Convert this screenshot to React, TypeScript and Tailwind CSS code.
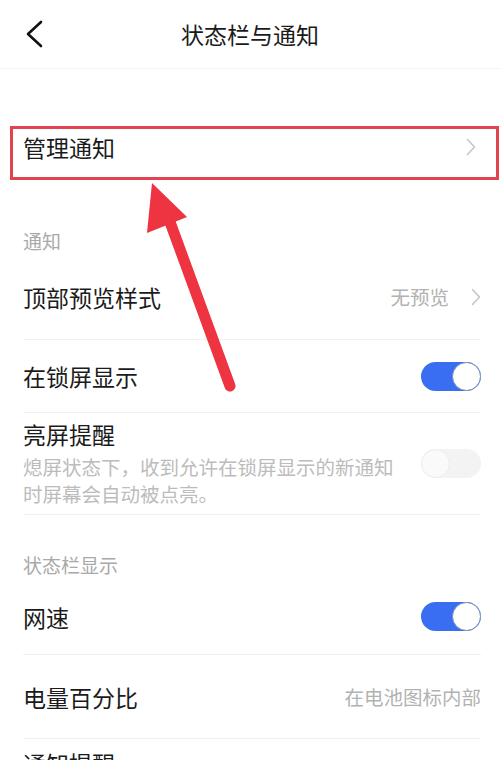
import React from 'react';

const font = { fontFamily: '"Noto Sans CJK SC", "Noto Sans", sans-serif' };

const Chevron: React.FC = () => (
  <svg width="10" height="18" viewBox="0 0 10 18" className="shrink-0">
    <polyline points="1.5,1.5 8.5,9 1.5,16.5" fill="none" stroke="#c6c6c6" strokeWidth="1.6" strokeLinecap="round" strokeLinejoin="round" />
  </svg>
);

const Toggle: React.FC<{ on: boolean }> = ({ on }) =>
  on ? (
    <div className="w-[60px] h-[29px] rounded-full bg-[#3a6ef2] flex items-center justify-end shrink-0">
      <div className="w-[29px] h-[29px] rounded-full bg-white border-[1.5px] border-[#7b8fb8]" />
    </div>
  ) : (
    <div className="w-[60px] h-[29px] rounded-full bg-[#f3f3f3] flex items-center justify-start shrink-0">
      <div className="w-[29px] h-[29px] rounded-full bg-[#fafafa] border border-[#ececec]" />
    </div>
  );

const SectionLabel: React.FC<{ text: string; pt: string }> = ({ text, pt }) => (
  <div className={`${pt} pb-[2px] pl-[23px] text-[19px] leading-[24px] text-[#a9a9a9]`}>{text}</div>
);

const Row: React.FC<{ h: string; children: React.ReactNode; last?: boolean }> = ({ h, children, last }) => (
  <div className={`${h} ml-[23px] mr-[19px] flex items-center justify-between ${last ? '' : 'border-b border-[#f0f0f0]'}`}>
    {children}
  </div>
);

export default function App() {
  return (
    <div className="relative w-[500px] h-[760px] overflow-hidden bg-white text-[#1b1b1b]" style={font}>
      {/* header */}
      <div className="h-[69px] relative flex items-center justify-center border-b border-[#f4f4f4]">
        <svg width="20" height="30" viewBox="0 0 20 30" className="absolute left-[24px] top-[19px]">
          <polyline points="17,3 4,15 17,27" fill="none" stroke="#111" strokeWidth="2.6" strokeLinecap="round" strokeLinejoin="round" />
        </svg>
        <div className="text-[23px] leading-[30px]">状态栏与通知</div>
      </div>

      {/* manage notifications, highlighted */}
      <div className="mt-[57px] ml-[10px] mr-[1px] h-[54px] border-[3px] border-[#e2434e] flex items-center justify-between pl-[10px] pr-[20px]">
        <div className="text-[23px] leading-[30px] -mt-[12px]">管理通知</div>
        <div className="-mt-[12px]">
          <Chevron />
        </div>
      </div>

      <SectionLabel text="通知" pt="pt-[49px]" />
      <Row h="h-[85px]">
        <div className="text-[23px] leading-[30px]">顶部预览样式</div>
        <div className="flex items-center gap-[22px]">
          <span className="text-[19.5px] text-[#b2b2b2]">无预览</span>
          <Chevron />
        </div>
      </Row>
      <Row h="h-[73px]">
        <div className="text-[23px] leading-[30px]">在锁屏显示</div>
        <Toggle on />
      </Row>
      <Row h="h-[102px]">
        <div className="flex flex-col">
          <div className="text-[23px] leading-[28px]">亮屏提醒</div>
          <div className="mt-[5px] w-[376px] text-[19.5px] leading-[27px] text-[#bcbcbc]">
            熄屏状态下，收到允许在锁屏显示的新通知时屏幕会自动被点亮。
          </div>
        </div>
        <Toggle on={false} />
      </Row>

      <SectionLabel text="状态栏显示" pt="pt-[38px]" />
      <Row h="h-[76px]">
        <div className="text-[23px] leading-[30px]">网速</div>
        <Toggle on />
      </Row>
      <Row h="h-[84px]">
        <div className="text-[23px] leading-[30px]">电量百分比</div>
        <span className="text-[19.5px] text-[#b2b2b2]">在电池图标内部</span>
      </Row>
      <Row h="h-[48px]" last>
        <div className="text-[23px] leading-[30px]">通知提醒</div>
      </Row>

      {/* annotation arrow */}
      <svg className="absolute left-0 top-0 pointer-events-none" width="500" height="760" viewBox="0 0 500 760">
        <line x1="230" y1="386" x2="170" y2="222" stroke="#ee3341" strokeWidth="11" strokeLinecap="round" />
        <polygon points="152,183 147,233 187,217" fill="#ee3341" />
      </svg>
    </div>
  );
}
